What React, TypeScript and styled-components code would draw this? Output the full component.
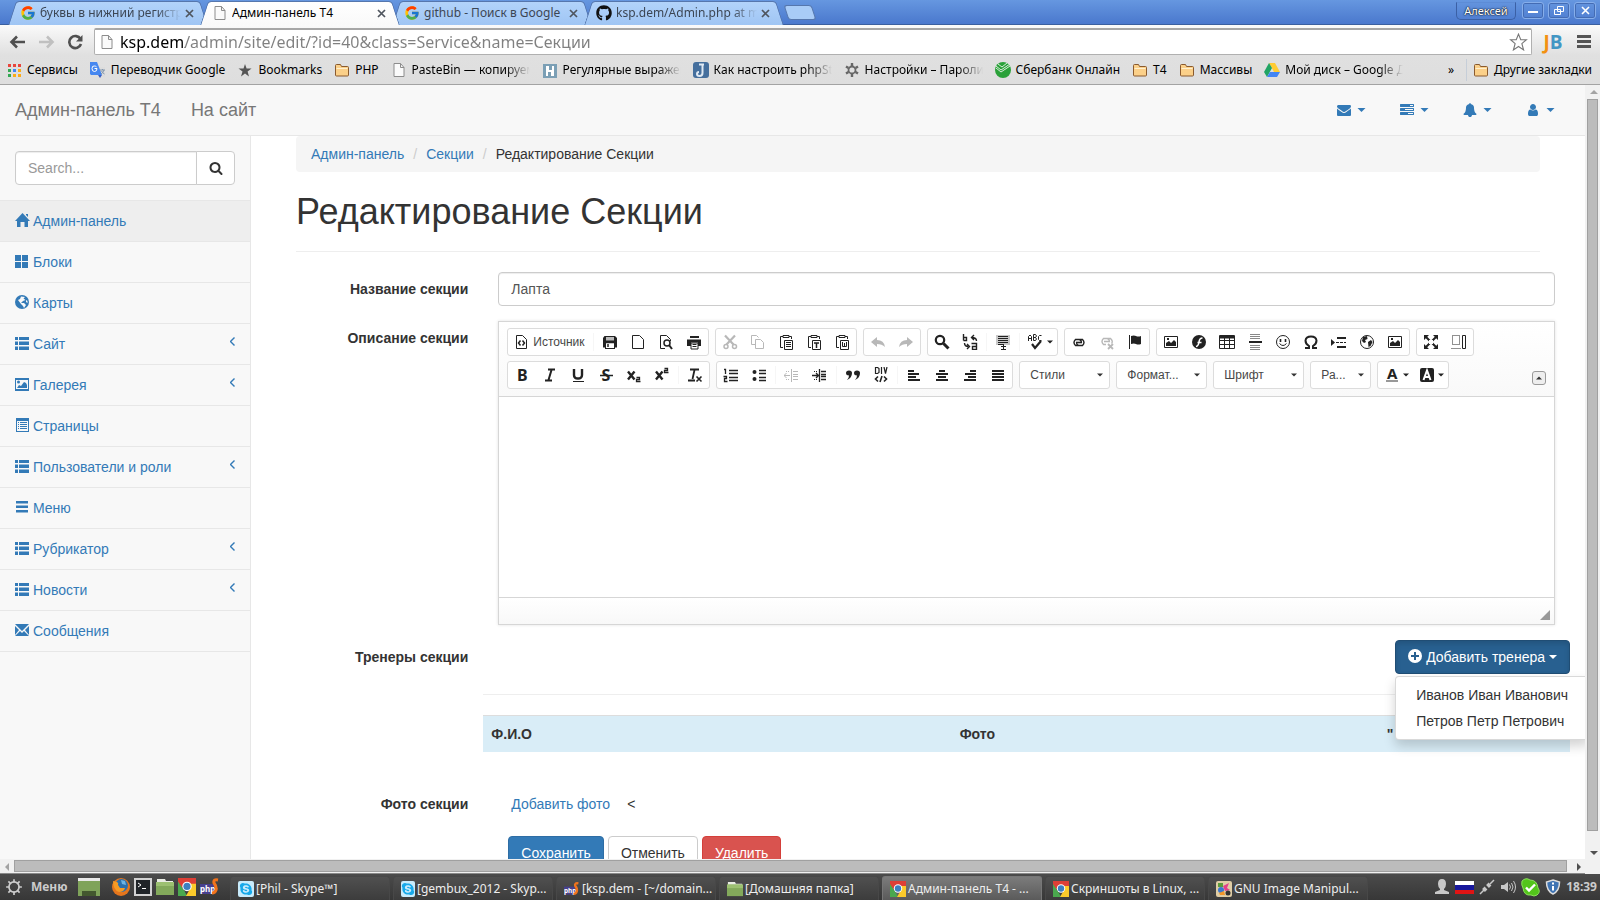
import React from 'react';
import styled, { createGlobalStyle, css } from 'styled-components';
import { FcGoogle } from 'react-icons/fc';
import { FaGithub, FaSkype } from 'react-icons/fa';

const SYSTEM_FONT = '"Noto Sans", "Open Sans", sans-serif';
const PAGE_FONT = '"Liberation Sans", Arial, sans-serif';
const BLUE = '#337ab7';

const GlobalStyle = createGlobalStyle`
  * { box-sizing: border-box; }
  body { margin: 0; overflow: hidden; font-family: ${PAGE_FONT}; font-size: 14px; line-height: 20px; color: #333; background: #fff; }
  button, input, select, textarea { font: inherit; color: inherit; margin: 0; }
  button { border: 0; padding: 0; background: none; cursor: pointer; }
  a { color: inherit; text-decoration: none; }
  ul, ol { list-style: none; margin: 0; padding: 0; }
  svg { display: block; flex: none; }
`;

/* ---------- desktop and browser window ---------- */

const Desktop = styled.div`
  height: 100vh;
  display: flex;
  flex-direction: column;
  overflow: hidden;
`;

const TitleBar = styled.header`
  flex: none;
  height: 25px;
  display: flex;
  justify-content: space-between;
  padding-left: 12px;
  font: 12px/16px ${SYSTEM_FONT};
  background: linear-gradient(#6697e0, #4a78cd);
  border-bottom: 1px solid #3a5f9f;
`;

const Tabs = styled.div`
  display: flex;
  align-items: flex-end;
`;

const Tab = styled.div<{ $active?: boolean }>`
  position: relative;
  z-index: ${p => (p.$active ? 1 : 0)};
  width: 192px;
  height: 24px;
  margin-bottom: -1px;
  padding: 0 10px 0 8px;
  display: flex;
  align-items: center;
  gap: 4px;
  color: ${p => (p.$active ? '#000' : '#3c4654')};
  &::before, &::after {
    content: '';
    position: absolute;
    z-index: -1;
    top: 0;
    bottom: 0;
    background: ${p => (p.$active ? 'linear-gradient(#fff, #f9f9f9)' : 'linear-gradient(#b2d3fa, #9fc5f4)')};
    border-top: 1px solid #5677ad;
  }
  &::before { left: 0; right: 50%; transform: skewX(-18deg); border-left: 1px solid #5677ad; border-radius: 4px 0 0 0; }
  &::after { right: 0; left: 50%; transform: skewX(18deg); border-right: 1px solid #5677ad; border-radius: 0 4px 0 0; margin-left: -6px; }
  &::before { margin-right: -6px; }
`;

const TabTitle = styled.button`
  flex: 1;
  min-width: 0;
  overflow: hidden;
  white-space: nowrap;
  text-align: left;
`;

const fade = css`
  mask-image: linear-gradient(90deg, #000 calc(100% - 24px), transparent);
`;

const FadedTabTitle = styled(TabTitle)`${fade}`;

const NewTab = styled.button`
  width: 28px;
  height: 15px;
  margin: 0 0 4px 6px;
  border: 1px solid #5677ad;
  border-radius: 3px;
  background: #a9ccf7;
  transform: skewX(18deg);
`;

const WindowButtons = styled.div`
  display: flex;
  gap: 4px;
  padding: 2px 4px 0 0;
`;

const WindowButton = styled.button`
  width: 22px;
  height: 17px;
  display: grid;
  place-items: center;
  border: 1px solid #86aeea;
  border-radius: 3px;
  color: #fff;
  box-shadow: 0 0 0 1px #446cb4 inset;
`;

const UserButton = styled.button`
  width: 60px;
  height: 18px;
  margin-right: 2px;
  border: 1px solid #3b60a5;
  border-top-color: #5d8cd6;
  border-radius: 0 0 5px 5px;
  color: #fff;
  font-size: 11px;
  text-shadow: 0 0 2px #000, 0 0 1px #000;
`;

const Toolbar = styled.div`
  flex: none;
  height: 60px;
  font: 12px/18px ${SYSTEM_FONT};
  color: #000;
  background: linear-gradient(#fafafa, #e0e0e0 30px, #dedede);
  border-bottom: 1px solid #a3a3a3;
`;

const AddressRow = styled.div`
  height: 33px;
  padding: 0 9px;
  display: flex;
  align-items: center;
  gap: 12px;
`;

const Address = styled.label`
  flex: 1;
  height: 27px;
  margin-left: -2px;
  padding: 0 3px 0 4px;
  display: flex;
  align-items: center;
  gap: 5px;
  background: #fff;
  border: 1px solid #b0b0b0;
  border-top: 2px solid #a6a6a6;
  border-radius: 2px;
`;

const AddressInput = styled.input`
  flex: 1;
  min-width: 0;
  padding: 0;
  border: 0;
  outline: 0;
  font-size: 16px;
  line-height: 22px;
  color: #808080;
  background: linear-gradient(90deg, #000 65px, #808080 65px);
  background-clip: text;
  -webkit-text-fill-color: transparent;
`;

const JetBrains = styled.button`
  width: 24px;
  margin-left: -3px;
  font: bold 19px/20px "Open Sans", sans-serif;
  color: #4296c4;
  span { color: #f29112; }
`;

const Bookmarks = styled.nav`
  height: 25px;
  padding: 0 8px 2px 6px;
  display: flex;
  align-items: center;
  gap: 12px;
`;

const Bookmark = styled.a<{ $cut?: boolean }>`
  display: flex;
  align-items: center;
  gap: 5px;
  white-space: nowrap;
  span {
    ${p => p.$cut && css`width: 118px; overflow: hidden; ${fade}`}
  }
`;

const MoreBookmarks = styled.button`
  margin-left: auto;
`;

const BookmarkDivider = styled.i`
  width: 1px;
  height: 22px;
  margin-right: -6px;
  background: #c6ced8;
`;

/* ---------- scrolled view ---------- */

const View = styled.div`
  flex: 1;
  min-height: 0;
  display: grid;
  grid-template: minmax(0, 1fr) 15px / minmax(0, 1fr) 15px;
  background: #f1f1f1;
`;

const Page = styled.div`
  overflow: hidden;
  display: flex;
  flex-direction: column;
  background: #f8f8f8;
`;

const Scrollbar = styled.div<{ $across?: boolean }>`
  display: flex;
  flex-direction: ${p => (p.$across ? 'row' : 'column')};
  padding: ${p => (p.$across ? '1px 0' : '0 2px')};
  border-bottom: ${p => (p.$across ? '1px solid #8a8a8a' : '0')};
  button { flex: none; width: 13px; height: 13px; display: grid; place-items: center; }
`;

const ScrollTrack = styled.div<{ $across?: boolean }>`
  flex: 1;
  padding: ${p => (p.$across ? '0 5px 0 1px' : '1px 0 15px')};
`;

const ScrollThumb = styled.div`
  height: 100%;
  background: #bcbcbc;
  border: 1px solid #a0a0a0;
`;

/* ---------- admin page ---------- */

const Navbar = styled.nav`
  flex: none;
  height: 51px;
  padding: 0 15px;
  display: flex;
  align-items: center;
  gap: 30px;
  color: #777;
  font-size: 18px;
  border-bottom: 1px solid #e7e7e7;
`;

const NavTools = styled.div`
  margin-left: auto;
  display: flex;
  gap: 4px;
  color: ${BLUE};
`;

const NavTool = styled.button`
  height: 50px;
  padding: 0 15px;
  display: flex;
  align-items: center;
  gap: 6px;
`;

const Body = styled.div`
  flex: 1;
  min-height: 0;
  display: flex;
`;

const Sidebar = styled.aside`
  flex: none;
  width: 250px;
`;

const Search = styled.form`
  display: flex;
  padding: 15px;
  input {
    flex: 1;
    min-width: 0;
    height: 34px;
    padding: 6px 12px;
    border: 1px solid #ccc;
    border-radius: 4px 0 0 4px;
    background: #fff;
    box-shadow: inset 0 1px 1px rgba(0, 0, 0, 0.075);
  }
  input::placeholder { color: #999; }
  button {
    width: 39px;
    margin-left: -1px;
    display: grid;
    place-items: center;
    border: 1px solid #ccc;
    border-radius: 0 4px 4px 0;
    background: #fff;
  }
`;

const Menu = styled.ul`
  border-top: 1px solid #e7e7e7;
`;

const MenuLink = styled.a<{ $active?: boolean }>`
  display: flex;
  align-items: center;
  gap: 3px;
  height: 41px;
  padding: 0 15px;
  color: ${BLUE};
  background: ${p => (p.$active ? '#eee' : 'transparent')};
  border-bottom: 1px solid #e7e7e7;
  > svg:first-child { margin-bottom: 2px; }
  > svg:last-child { margin: 0 0 6px auto; }
`;

const Content = styled.main`
  flex: 1;
  min-width: 0;
  padding: 0 45px;
  background: #fff;
  border-left: 1px solid #e7e7e7;
`;

const Breadcrumb = styled.ol`
  display: flex;
  padding: 8px 15px;
  background: #f5f5f5;
  border-radius: 4px;
  a { color: ${BLUE}; }
  li + li::before { content: '/'; padding: 0 9px; color: #ccc; }
`;

const Title = styled.h1`
  margin: 20px 0;
  padding-bottom: 19px;
  font-size: 36px;
  font-weight: 400;
  line-height: 40px;
  border-bottom: 1px solid #eee;
`;

const Form = styled.form`
  margin: 0 -30px;
`;

const Group = styled.div`
  display: grid;
  grid-template-columns: minmax(0, 1fr) minmax(0, 5fr);
  margin-bottom: 15px;
`;

const labelStyle = css`
  padding: 7px 15px 0 0;
  text-align: right;
  font-weight: bold;
`;

const Label = styled.label`${labelStyle}`;
const Caption = styled.div`${labelStyle}`;

const Field = styled.div`
  padding: 0 15px;
`;

const TextInput = styled.input`
  display: block;
  width: 100%;
  height: 34px;
  padding: 6px 12px;
  color: #555;
  border: 1px solid #ccc;
  border-radius: 4px;
  box-shadow: inset 0 1px 1px rgba(0, 0, 0, 0.075);
`;

const Button = styled.button<{ $tone?: 'primary' | 'danger' | 'open' | 'link' }>`
  height: 34px;
  padding: 0 12px;
  display: inline-flex;
  align-items: center;
  gap: 4px;
  border: 1px solid #ccc;
  border-radius: 4px;
  background: #fff;
  ${p => p.$tone === 'primary' && css`color: #fff; background: #337ab7; border-color: #2e6da4;`}
  ${p => p.$tone === 'danger' && css`color: #fff; background: #d9534f; border-color: #d43f3a;`}
  ${p => p.$tone === 'open' && css`color: #fff; background: #286090; border-color: #204d74; box-shadow: inset 0 3px 5px rgba(0, 0, 0, 0.125);`}
  ${p => p.$tone === 'link' && css`color: ${BLUE}; background: none; border-color: transparent;`}
`;

const Actions = styled.div`
  display: flex;
  gap: 4px;
  padding-left: 25px;
`;

const Dropdown = styled.div`
  position: relative;
  width: max-content;
  margin-left: auto;
`;

const DropdownMenu = styled.ul`
  position: absolute;
  z-index: 2;
  top: 100%;
  left: 0;
  margin-top: 2px;
  padding: 5px 0;
  background: #fff;
  border: 1px solid rgba(0, 0, 0, 0.15);
  border-radius: 4px;
  box-shadow: 0 6px 12px rgba(0, 0, 0, 0.175);
  a { display: block; padding: 3px 20px; white-space: nowrap; }
`;

const Rule = styled.hr`
  margin: 20px 0;
  border: 0;
  border-top: 1px solid #eee;
`;

const Table = styled.table`
  width: 100%;
  margin-bottom: 35px;
  table-layout: fixed;
  border-collapse: separate;
  border-spacing: 0;
  th { padding: 8px; text-align: left; background: #d9edf7; border-top: 1px solid #ddd; }
  th:nth-child(1) { width: 43.1%; }
  th:nth-child(2) { width: 39.3%; }
`;

const Remark = styled.span`
  padding-left: 4px;
  line-height: 32px;
`;

/* ---------- rich text editor ---------- */

const Editor = styled.div`
  border: 1px solid #d6d6d6;
  box-shadow: 0 0 3px rgba(0, 0, 0, 0.12);
`;

const EditorTools = styled.div`
  display: flex;
  flex-direction: column;
  gap: 5px;
  padding: 6px 8px 7px;
  background: linear-gradient(#fff, #f9f9f9);
  border-bottom: 1px solid #d6d6d6;
`;

const ToolRow = styled.div`
  display: flex;
  gap: 6px;
`;

const ToolGroup = styled.div`
  flex: none;
  height: 28px;
  display: flex;
  align-items: center;
  border: 1px solid #dcdcdc;
  border-radius: 3px;
  background: #fff;
`;

const Tool = styled.button<{ $off?: boolean; $width?: number }>`
  width: ${p => p.$width ?? 28}px;
  height: 26px;
  padding: 0 6px;
  display: flex;
  align-items: center;
  gap: 3px;
  color: ${p => (p.$off ? '#b8b8b8' : '#222')};
  font-size: 12px;
  text { font-family: ${SYSTEM_FONT}; font-weight: bold; fill: currentColor; stroke: none; }
`;

const ToolText = styled.span`
  color: #474747;
`;

const Separator = styled.i`
  width: 1px;
  height: 18px;
  margin: 0 2px;
  background: #f6f6f6;
`;

const Combo = styled.label<{ $small?: boolean }>`
  position: relative;
  width: ${p => (p.$small ? 61 : 91)}px;
  height: 28px;
  select {
    appearance: none;
    width: 100%;
    height: 28px;
    padding: 0 20px 0 10px;
    font-size: 12px;
    color: #474747;
    border: 1px solid #dcdcdc;
    border-radius: 3px;
    background: #fff;
  }
  svg { position: absolute; right: 7px; top: 12px; pointer-events: none; }
`;

const Collapse = styled.button`
  align-self: flex-end;
  width: 14px;
  height: 14px;
  margin: 0 0 4px auto;
  display: grid;
  place-items: center;
  border: 1px solid #999;
  border-radius: 3px;
  background: #eee;
`;

const EditorArea = styled.textarea`
  display: block;
  width: 100%;
  height: 200px;
  border: 0;
  outline: 0;
  resize: none;
`;

const EditorFoot = styled.div`
  height: 27px;
  padding: 0 4px 4px 0;
  display: flex;
  align-items: flex-end;
  justify-content: flex-end;
  border-top: 1px solid #d6d6d6;
  background: linear-gradient(#fff, #f8f8f8);
`;

/* ---------- taskbar ---------- */

const Taskbar = styled.footer`
  flex: none;
  height: 26px;
  padding: 0 3px 0 5px;
  display: flex;
  align-items: center;
  font: 12px/18px ${SYSTEM_FONT};
  color: #eee;
  background: linear-gradient(#4b4b4b, #373737);
`;

const StartButton = styled.button`
  width: 73px;
  display: flex;
  align-items: center;
  gap: 8px;
  font-weight: bold;
  color: #ccc;
`;

const Launchers = styled.div`
  width: 152px;
  display: flex;
  align-items: center;
  gap: 4px;
  button:first-child { margin-right: 8px; }
`;

const Tasks = styled.div`
  flex: 1;
  min-width: 0;
  display: flex;
  align-self: flex-end;
  gap: 3px;
`;

const Task = styled.button<{ $active?: boolean }>`
  width: 160px;
  height: 24px;
  padding: 0 7px;
  display: flex;
  align-items: center;
  gap: 2px;
  white-space: nowrap;
  border: 1px solid ${p => (p.$active ? '#777' : '#484848')};
  border-bottom: 0;
  border-radius: 3px 3px 0 0;
  background: ${p => (p.$active ? 'linear-gradient(#7c7c7c, #5a5a5a)' : 'linear-gradient(#505050, #3c3c3c)')};
`;

const Tray = styled.div`
  display: flex;
  align-items: center;
  gap: 5px;
  color: #c8c8c8;
  strong { color: #ccc; }
`;

/* ---------- icons ---------- */

type Kids = { children: React.ReactNode; w?: number; h?: number; box?: string };

const Ico = ({ children, w = 16, h = 16, box }: Kids) => (
  <svg width={w} height={h} viewBox={box ?? `0 0 ${w} ${h}`} fill="currentColor" aria-hidden="true">{children}</svg>
);
const Line = ({ children, w = 16, h = 16, box }: Kids) => (
  <svg width={w} height={h} viewBox={box ?? `0 0 ${w} ${h}`} fill="none" stroke="currentColor" aria-hidden="true">{children}</svg>
);

const Caret = ({ w = 8, up }: { w?: number; up?: boolean }) => (
  <Ico w={w} h={4} box="0 0 8 4"><path d={up ? 'M0 4L4 0L8 4z' : 'M0 0H8L4 4z'} /></Ico>
);
const FileIcon = () => (
  <Line><path d="M3 1.5h6.5l3.500 4V14.500H3z" fill="#fafafa" stroke="#8c8c8c" /><path d="M9.500 1.500v4H13" stroke="#8c8c8c" /></Line>
);
const FolderIcon = () => (
  <Line>
    <path d="M1.500 13V3.500q0-1 1-1h4l1 2h6q1 0 1 1V13q0 1-1 1h-11q-1 0-1-1z" fill="#fbd089" stroke="#8a5a2e" />
    <path d="M2.500 6.500h11" stroke="#fff0cf" />
  </Line>
);
const CloseIcon = () => <Line w={9} h={9}><path d="M1 1l7 7M8 1l-7 7" strokeWidth="1.700" stroke="#4f555e" /></Line>;
const ChromeIcon = ({ s = 16 }: { s?: number }) => (
  <Ico w={s} h={s} box="0 0 16 16">
    <path d="M0 0H16V6H5L3 10L0 5z" fill="#dd3f36" />
    <path d="M0 3L6 12L8 16H0z" fill="#4aa84e" />
    <path d="M8 5H16V16H7L11 9z" fill="#fccb2b" />
    <circle cx="8" cy="7.500" r="4.200" fill="#fff" /><circle cx="8" cy="7.500" r="3.200" fill="#3c7fc0" />
  </Ico>
);
const PhpStormIcon = ({ s = 20 }: { s?: number }) => (
  <Ico w={s} h={s === 20 ? 18 : 16} box="0 0 20 18">
    <path d="M0 6h14v10H0z" fill="#47408e" />
    <text x="0" y="14" fontSize="8" fontWeight="bold" fontFamily="Noto Sans" fill="#fff">php</text>
    <path d="M18 2q-5-1-4 3 3 4 2 7-1 3-4 3" fill="none" stroke="#f2731c" strokeWidth="3" />
  </Ico>
);
const GreenFolder = ({ s = 18 }: { s?: number }) => (
  <Ico w={s} h={s} box="0 0 18 18"><path d="M1 3V1h8l1 2h7v3H1z" fill="#e9ece4" /><path d="M0 4h18v13H0z" fill="#83a95b" /><path d="M0 4h18v4H0z" fill="#9cc071" /></Ico>
);
const SkypeTile = styled.span`
  width: 16px;
  height: 16px;
  display: grid;
  place-items: center;
  border-radius: 2px;
  background: #c9ecfc;
  color: #17a9ea;
  font-size: 14px;
`;

const FA = {
  mail: 'M1792 710v794q0 66-47 113t-113 47h-1472q-66 0-113-47t-47-113v-794q44 49 101 87 362 246 497 345 57 42 92.5 65.5t94.5 48 110 24.5h2q51 0 110-24.5t94.5-48 92.5-65.5q170-123 498-345 57-39 100-87zm0-294q0 79-49 151t-122 123q-376 261-468 325-10 7-42.5 31t-54 38.5-52 32.5-57.5 27-50 9h-2q-23 0-50-9t-57.5-27-52-32.5-54-38.5-42.5-31q-91-64-262-182.5t-205-142.5q-62-42-117-115.5t-55-136.5q0-78 41.5-130t118.5-52h1472q65 0 112.5 47t47.5 113z',
  tasks: 'M1024 1408h640v-128h-640v128zm-384-512h1024v-128h-1024v128zm640-512h384v-128h-384v128zm512 832v256q0 26-19 45t-45 19h-1664q-26 0-45-19t-19-45v-256q0-26 19-45t45-19h1664q26 0 45 19t19 45zm0-512v256q0 26-19 45t-45 19h-1664q-26 0-45-19t-19-45v-256q0-26 19-45t45-19h1664q26 0 45 19t19 45zm0-512v256q0 26-19 45t-45 19h-1664q-26 0-45-19t-19-45v-256q0-26 19-45t45-19h1664q26 0 45 19t19 45z',
  bell: 'M1728 1408q0 52-38 90t-90 38h-448q0 106-75 181t-181 75-181-75-75-181h-448q-52 0-90-38t-38-90q50-42 91-88t85-119.5 74.5-158.5 50-206 19.5-260q0-152 117-282.5t307-158.5q-8-19-8-39 0-40 28-68t68-28 68 28 28 68q0 20-8 39 190 28 307 158.5t117 282.5q0 139 19.5 260t50 206 74.5 158.500 85 119.500 91 88z',
  user: 'M1536 1399q0 109-62.5 187t-150.5 78h-854q-88 0-150.5-78t-62.5-187q0-85 8.5-160.500t31.500-152 58.500-131 94-89 134.500-34.500q131 128 313 128t313-128q76 0 134.500 34.500t94 89 58.500 131 31.500 152 8.500 160.500zm-256-887q0 159-112.500 271.500t-271.500 112.500-271.500-112.500-112.500-271.500 112.500-271.500 271.500-112.500 271.500 112.500 112.500 271.500z',
  search: 'M1216 832q0-185-131.5-316.5t-316.5-131.5-316.500 131.500-131.500 316.500 131.500 316.500 316.500 131.500 316.500-131.500 131.500-316.500zm512 832q0 52-38 90t-90 38q-54 0-90-38l-343-342q-179 124-399 124-143 0-273.500-55.500t-225-150-150-225-55.500-273.500 55.500-273.500 150-225 225-150 273.500-55.500 273.500 55.500 225 150 150 225 55.500 273.500q0 220-124 399l343 343q37 37 37 90z',
};
const Awesome = ({ d }: { d: string }) => <Ico w={14} h={14} box="0 0 1792 1792"><path d={d} /></Ico>;

const glyphs: Record<string, React.ReactNode> = {
  home: <path d="M7.500 0L15 8h-2v6H9.500V9h-4v5H2V8H0zM11 1h2v3l-2-2z" />,
  blocks: <path d="M0 1h6v6H0zM7 1h6v6H7zM0 8h6v6H0zM7 8h6v6H7z" />,
  globe: <><circle cx="7" cy="7" r="7" /><path d="M6 1.500L10 2L8.500 3.500L10.500 5L8 6L6 8H9l2 2-2 3-1-2-2-2-1.500-2L3 5l2-1zM11 5l1.500 1v2L11 7z" fill="#f8f8f8" /></>,
  list: <path d="M0 1h3v3H0zM4 1h10v3H4zM0 5.500h3v3.500H0zM4 5.500h10v3.500H4zM0 10.500h3v3.500H0zM4 10.500h10v3.500H4z" />,
  picture: <><path fillRule="evenodd" d="M0 1h14v13H0zM1 3v9h12V3z" /><path d="M2 11l2-3 2 1 3-4 2 1 1 2v3z" /><circle cx="3.500" cy="5" r="1.500" /></>,
  page: <><path fillRule="evenodd" d="M1 0h13v14H1zM2 3v10h11V3z" /><path d="M3 4h1v1H3zM5 4h7v1H5zM3 6h1v1H3zM5 6h7v1H5zM3 8h1v1H3zM5 8h7v1H5zM3 10h1v1H3zM5 10h7v1H5z" /></>,
  menu: <path d="M1 1h12v2.500H1zM1 5.500h12V8H1zM1 10h12v2.500H1z" />,
  mail: <path d="M0 1h14L7 8zM0 3l4 4-4 5zM14 3v9l-4-5zM0 13l5-5 2 2 2-2 5 5z" />,
};

const disk = <><path d="M1 4l1.500-2H13L15 4v9.500H13V15H3V13.500H1z" fill="currentColor" stroke="none" /><path d="M4 3h8v3.500H4z" fill="#bbb" stroke="none" /><path d="M4 9h8v5H4z" fill="#fff" stroke="none" /><path d="M6 10v3M4 8.500h8" strokeWidth="1.500" /></>;
const sheet = 'M2.500 1.500h7l4 4v9h-11z';
const clip = <><path d="M5 2.500H2.500v11H5M11 2.500h2.500V5M5 1.500h6v2H5z" /><path d="M6.500 6.500h8v9h-8z" fill="#fff" /></>;
const picture = <><path d="M1.500 2.500h13v11h-13z" /><path d="M3 12V9l3-2 2 2 3-3 2 2v4z" fill="currentColor" stroke="none" /><path d="M4 4h2v2H4z" fill="currentColor" stroke="none" /></>;
const bars = (a: number[][]) => a.map(([x, w], i) => <path key={i} d={`M${x} ${4 + i * 3}h${w}`} strokeWidth="2" />);

const toolIcons: Record<string, React.ReactNode> = {
  source: <><path d="M2.500 1.500h6l4 4v9h-10z" /><path d="M6.500 6.500L4.500 9l2 2.500M8.500 6.500l2 2.500-2 2.500" strokeWidth="1.500" /></>,
  save: disk,
  blank: <path d={sheet} />,
  preview: <><path d="M7 14.500H2.500v-13h6l4 4V7" /><circle cx="9" cy="9" r="3" strokeWidth="1.500" /><path d="M11 11l3 4" strokeWidth="2" /></>,
  print: <><path d="M4 3h9" strokeWidth="2" /><path d="M1 5.500h14V12h-3V8.500H5V12H1z" fill="currentColor" stroke="none" /><path d="M5 9h7v6H5zM6.500 10.500h4M6.500 12.500h4" /></>,
  cut: <><path d="M3 1.500l8.500 9M13 1.500l-8.500 9" strokeWidth="2.200" /><circle cx="4" cy="12.500" r="2" strokeWidth="1.500" /><circle cx="12.500" cy="12.500" r="2" strokeWidth="1.500" /></>,
  copy: <><path d="M5 10.500H1.500v-9h5l2 2" /><path d="M5.500 5.500h5l3 3v6h-8z" /></>,
  paste: <>{clip}<path d="M8 8.500h5M8 10.500h5M8 12.500h5" /></>,
  pasteText: <>{clip}<path d="M8 9h5M10.500 9v5" strokeWidth="1.500" /></>,
  pasteWord: <>{clip}<path d="M8.500 8v4.500h4V8M10.500 9v3" /></>,
  undo: <path d="M1 8l6-5v3q7 0 8 7-3-3-8-3v3z" fill="currentColor" stroke="none" />,
  redo: <path d="M15 8L9 3v3q-7 0-8 7 3-3 8-3v3z" fill="currentColor" stroke="none" />,
  find: <><circle cx="6" cy="6" r="4.200" strokeWidth="2.200" /><path d="M9.500 9.500l5 5" strokeWidth="3" /></>,
  replace: <><path d="M1.500 0v6.500M1.500 3.500h3v3h-3M9.500 9.500h5v6h-4v-3h4M14.500 7q0-3.500-5-3.500M12 1L9.500 3.500 12 6M2.500 9q0 3.500 4 3.500M5 10l2.500 2.500L5 15" strokeWidth="1.400" /></>,
  selectAll: <><path d="M1 1h14v10H1z" fill="#c9c9c9" stroke="none" /><path d="M3 2.500h10M3 4.500h10M3 6.500h10M3 8.500h10M3 10.500h6M8.500 11v4M6 15.500h5M6 12.500h5" /></>,
  spell: <><path d="M.5 7V2.500q1.500-3 3 0V7M.5 4.500h3M5.500 .5v6h2l1-1.500-1-1.500h-2 2l1-1.500-1-1.500zM13.500 1.500h-2l-1 1v3l1 1h2" /><path d="M4 10l3 4 6-7" strokeWidth="2.200" /></>,
  link: <><path d="M7 11.500H4.500q-3-3 0-6h4q2 1 2 3M9 5.500h2.500q3 3 0 6h-4q-2-1-2-3" strokeWidth="1.400" /><path d="M5 8.500h6" strokeWidth="1.600" /></>,
  unlink: <><path d="M7 10.500H4.500q-3-3 0-6h4q2 1 2 3M9 4.500h2.500q3 3 1 5M5 7.500h6" strokeWidth="1.400" /><path d="M9 10l5 5M14 10l-5 5" strokeWidth="1.800" /></>,
  flag: <><path d="M2.500 1v14" /><path d="M4 2q3-1 5 0t5 0v8q-3 1-5 0t-5 0z" fill="currentColor" stroke="none" /></>,
  image: picture,
  flash: <><circle cx="8" cy="8" r="7" fill="currentColor" stroke="none" /><path d="M11.500 4Q8.500 4 8 8t-3 4.500M6.500 8.500h4" stroke="#fff" strokeWidth="1.600" /></>,
  table: <><path d="M.5 1.500h15v13H.5zM.5 6.500h15M.5 10.500h15M5.500 4v11M10.500 4v11" /><path d="M1 3h14" strokeWidth="3" /></>,
  rule: <><path d="M3 .5h10M3 2.500h10M3 4.500h10M3 11.500h10M3 13.500h10M3 15.500h10" stroke="#888" /><path d="M2 8h13" strokeWidth="2" /></>,
  smile: <><circle cx="8" cy="8" r="6.500" /><path d="M5.500 5v3M10.500 5v3" strokeWidth="1.600" /><path d="M4.500 9.500q3.500 4 7 0" /></>,
  omega: <path d="M2 14h4v-2Q2.500 10 2.500 6.500 3 2.500 8 2.500t5.500 4Q13.500 10 10 12v2h4" strokeWidth="2" />,
  pageBreak: <><path d="M0 5l4 3.500-4 3.500z" fill="currentColor" stroke="none" /><path d="M6 4h9M6 13h9" strokeWidth="2" /><path d="M5 8.500h10" strokeDasharray="3 1" /></>,
  iframe: <><circle cx="8" cy="8" r="6.500" /><path d="M4 3l4-1 .5 3-2.500 1 1 2-2 1-2-2zM9 8l3-2 1.500 2-2 4-2 1z" fill="currentColor" stroke="none" /></>,
  maximize: <><path d="M3 3l10 10M13 3L3 13" strokeWidth="2" /><path d="M6 6h4v4H6z" fill="#fff" stroke="none" /><path d="M1 1h5L1 6zM15 1v5l-5-5zM1 15v-5l5 5zM15 15h-5l5-5z" fill="currentColor" stroke="none" /></>,
  showBlocks: <><path d="M1.500 1.500h7v9h-7zM.5 14.500h9" strokeDasharray="1 1" /><path d="M11.500 1.500h3v13h-3z" /></>,
  bold: <text x="3" y="14" fontSize="16">B</text>,
  italic: <path d="M6 2.500h7M3 13.500h7M9.500 3l-3 10" strokeWidth="2" />,
  underline: <><path d="M4 2v6q0 3.500 4 3.500t4-3.500V2" strokeWidth="2.400" /><path d="M3 14.500h11" /></>,
  strike: <><text x="3.500" y="14" fontSize="16">S</text><path d="M2 8.500h13" strokeWidth="1.500" /></>,
  sub: <><path d="M2 4.500l6.500 8M8.500 4.500L2 12.500" strokeWidth="2.400" /><path d="M10.500 10.500h3v2h-3v2h4" strokeWidth="1.300" /></>,
  sup: <><path d="M2 4.500l6.500 8M8.500 4.500L2 12.500" strokeWidth="2.400" /><path d="M10.500 1.500h3v2h-3v2h4" strokeWidth="1.300" /></>,
  clear: <><path d="M3 2.500h9M7.500 3l-2 9M1 13.500h7" strokeWidth="1.800" /><path d="M9.500 9.500l5 5M14.500 9.500l-5 5" strokeWidth="1.600" /></>,
  ordered: <><path d="M1 2.500h1.500V7M.5 9.500h3v2h-2v3h3M6 3.500h9M6 6.500h9M6 10.500h9M6 13.500h9" strokeWidth="1.300" /></>,
  bullets: <><circle cx="3.500" cy="5" r="2" fill="currentColor" stroke="none" /><circle cx="3.500" cy="12" r="2" fill="currentColor" stroke="none" /><path d="M8 3.500h7M8 6.500h7M8 10.500h7M8 13.500h7" strokeWidth="1.400" /></>,
  outdent: <><path d="M0 8.500h6M2.500 6L0 8.500 2.500 11M9 4.500h5M9 7.500h5M9 9.500h5M9 12.500h5M7.500 2v13" /><path d="M2 4.500h4M2 12.500h4" strokeDasharray="1 1" /></>,
  indent: <><path d="M0 8.500h6M4 6l2.500 2.500L4 11M9 4.500h5M9 7.500h5M9 9.500h5M9 12.500h5M7.500 2v13" strokeWidth="1.300" /><path d="M2 4.500h4M2 12.500h4" strokeDasharray="1 1" /></>,
  quote: <path d="M1 6q0-2.500 3-2.500T7 6q0 5-5 7 2-2 2-4.500Q1 8.500 1 6zM9 6q0-2.500 3-2.500T15 6q0 5-5 7 2-2 2-4.500Q9 8.500 9 6z" fill="currentColor" stroke="none" />,
  div: <><path d="M2.500 .5h2l1.500 1v4l-1.500 1h-2zM8.500 0v7M11 0l1.500 6.500L14 0" strokeWidth="1.200" /><path d="M5 9.500l-2.500 2.500L5 14.500M11 9.500l2.500 2.500-2.500 2.500M9 9l-2 6" strokeWidth="1.600" /></>,
  left: bars([[2, 6], [2, 11], [2, 8], [2, 12]]),
  center: bars([[5, 6], [2, 12], [4, 8], [2, 12]]),
  right: bars([[8, 6], [3, 11], [6, 8], [2, 12]]),
  justify: bars([[2, 12], [2, 12], [2, 12], [2, 12]]),
  color: <><text x="3" y="12" fontSize="15">A</text><path d="M2 14h12" stroke="#999" strokeWidth="2" /></>,
  background: <><rect x="1" y="1" width="14" height="14" rx="2" fill="currentColor" stroke="none" /><path d="M4.500 13L8 3.500 11.500 13M6 10h4" stroke="#fff" strokeWidth="2" /></>,
};

type ToolSpec = [icon: string, title: string, option?: 'off' | 'menu' | 'text'] | '|';

const ToolSet = ({ items }: { items: ToolSpec[] }) => (
  <ToolGroup>
    {items.map((item, i) =>
      item === '|' ? <Separator key={i} /> : (
        <Tool key={i} type="button" aria-label={item[1]} $off={item[2] === 'off'} $width={item[2] === 'text' ? 83 : item[2] === 'menu' ? 35 : 28}>
          <Line>{toolIcons[item[0]]}</Line>
          {item[2] === 'text' && <ToolText>{item[1]}</ToolText>}
          {item[2] === 'menu' && <Caret w={6} />}
        </Tool>
      ))}
  </ToolGroup>
);

const topTools: ToolSpec[][] = [
  [['source', 'Источник', 'text'], '|', ['save', 'Сохранить'], ['blank', 'Новая страница'], ['preview', 'Предварительный просмотр'], ['print', 'Печать']],
  [['cut', 'Вырезать', 'off'], ['copy', 'Копировать', 'off'], ['paste', 'Вставить'], ['pasteText', 'Вставить только текст'], ['pasteWord', 'Вставить из Word']],
  [['undo', 'Отменить', 'off'], ['redo', 'Повторить', 'off']],
  [['find', 'Найти'], ['replace', 'Заменить'], '|', ['selectAll', 'Выделить все'], '|', ['spell', 'Проверка орфографии', 'menu']],
  [['link', 'Ссылка'], ['unlink', 'Убрать ссылку', 'off'], ['flag', 'Якорь']],
  [['image', 'Изображение'], ['flash', 'Flash'], ['table', 'Таблица'], ['rule', 'Горизонтальная линия'], ['smile', 'Смайлы'], ['omega', 'Специальный символ'], ['pageBreak', 'Разрыв страницы'], ['iframe', 'iFrame'], ['image', 'Картинка']],
  [['maximize', 'Развернуть'], ['showBlocks', 'Показать блоки']],
];

const formatTools: ToolSpec[][] = [
  [['bold', 'Полужирный'], ['italic', 'Курсив'], ['underline', 'Подчеркнутый'], ['strike', 'Зачеркнутый'], ['sub', 'Подстрочный индекс'], ['sup', 'Надстрочный индекс'], '|', ['clear', 'Убрать форматирование']],
  [['ordered', 'Нумерованный список'], ['bullets', 'Маркированный список'], '|', ['outdent', 'Уменьшить отступ', 'off'], ['indent', 'Увеличить отступ'], '|', ['quote', 'Цитата'], ['div', 'Контейнер'], '|', ['left', 'По левому краю'], ['center', 'По центру'], ['right', 'По правому краю'], ['justify', 'По ширине']],
];

const combos = [['Стили', 'Стили'], ['Формат...', 'Форматирование'], ['Шрифт', 'Шрифт'], ['Ра...', 'Размер']];

const sections: [icon: string, text: string, nested?: boolean][] = [
  ['home', 'Админ-панель'], ['blocks', 'Блоки'], ['globe', 'Карты'], ['list', 'Сайт', true], ['picture', 'Галерея', true],
  ['page', 'Страницы'], ['list', 'Пользователи и роли', true], ['menu', 'Меню'], ['list', 'Рубрикатор', true], ['list', 'Новости', true], ['mail', 'Сообщения'],
];

const squares = ['#e8453c', '#e8453c', '#e8453c', '#34a853', '#4285f4', '#fbab17', '#34a853', '#fbab17', '#fbab17'];
const gearPath = 'M8 1v3M8 12v3M1 8h3M12 8h3M3 3l2 2M11 11l2 2M13 3l-2 2M5 11l-2 2';
const sixGear = 'M8 1v3M8 12v3M2 4.500l2.500 1.500M11.500 10l2.500 1.500M14 4.500l-2.500 1.500M4.500 10L2 11.500';

const bookmarks: { text: string; cut?: boolean; icon: React.ReactNode }[] = [
  { text: 'Сервисы', icon: <Ico>{squares.map((c, i) => <rect key={i} x={2 + (i % 3) * 5} y={2 + Math.floor(i / 3) * 5} width="3" height="3" fill={c} />)}</Ico> },
  { text: 'Переводчик Google', icon: <Ico><path d="M7 5h8v10H9z" fill="#dcdcdc" /><path d="M0 0h7l5 13H1L0 12z" fill="#4687f0" /><path d="M8 13h4l-2 3z" fill="#3a5fc4" /><path d="M7 6.500h-2.500M7 6.500q0 3-2.500 3t-2.500-3 2.500-2.500q1 0 2 .8" stroke="#fff" fill="none" /><path d="M10 8h5M12.500 7v1M14 8q-1 3-3 4M11.500 9q1 2 3 3" stroke="#8296ad" fill="none" /></Ico> },
  { text: 'Bookmarks', icon: <Ico><path d="M8 2l1.600 4.500h5l-4 3L12 14.500 8 11.500 4 14.500l1.500-5-4-3h5z" fill="#555" /></Ico> },
  { text: 'PHP', icon: <FolderIcon /> },
  { text: 'PasteBin — копируем', cut: true, icon: <FileIcon /> },
  { text: 'Регулярные выражения', cut: true, icon: <Ico><rect x="1" y="2" width="14" height="14" fill="#7b9fb5" /><path d="M4 4h3v4h3V4h2v10H9v-4H6v4H4z" fill="#fff" /></Ico> },
  { text: 'Как настроить phpStorm', cut: true, icon: <Ico><rect width="16" height="16" rx="3" fill="#456f9d" /><path d="M6 2.500h5M9.500 2v9q0 3-3 3-2.500 0-2.500-2t2-2" fill="none" stroke="#dfe9f3" strokeWidth="2" /></Ico> },
  { text: 'Настройки – Пароли', cut: true, icon: <Line><circle cx="8" cy="8" r="3.500" strokeWidth="1.800" stroke="#666" /><path d={sixGear} stroke="#666" strokeWidth="2.400" /></Line> },
  { text: 'Сбербанк Онлайн', icon: <Ico><circle cx="8" cy="8" r="8" fill="#2aa139" /><path d="M1 4l5 4L15 2M1 6l5 4 9-6M3 2l4 3 5-4" stroke="#d9efdb" fill="none" /></Ico> },
  { text: 'T4', icon: <FolderIcon /> },
  { text: 'Массивы', icon: <FolderIcon /> },
  { text: 'Мой диск – Google Диск', cut: true, icon: <Ico><path d="M5 1h6l5 9h-6z" fill="#fc3" /><path d="M5 1l3 5-5 9-3-5z" fill="#21a464" /><path d="M6 10h10l-3 5H3z" fill="#4285f4" /></Ico> },
];

const tasks: { text: string; icon: React.ReactNode; active?: boolean }[] = [
  { text: '[Phil - Skype™]', icon: <SkypeTile><FaSkype /></SkypeTile> },
  { text: '[gembux_2012 - Skyp...', icon: <SkypeTile><FaSkype /></SkypeTile> },
  { text: '[ksp.dem - [~/domain...', icon: <PhpStormIcon s={16} /> },
  { text: '[Домашняя папка]', icon: <GreenFolder s={16} /> },
  { text: 'Админ-панель T4 - ...', icon: <ChromeIcon />, active: true },
  { text: 'Скриншоты в Linux, ...', icon: <ChromeIcon /> },
  { text: 'GNU Image Manipul...', icon: <Ico><rect width="16" height="16" rx="2" fill="#dfcda5" /><path d="M2 2h5v4H2z" fill="#5a9a3c" /><path d="M7 5l6-3-2 5 3 2-5 1z" fill="#e33f8b" /><circle cx="5" cy="9" r="3" fill="#3b78d0" /><path d="M3 12l5-2 1 4H4z" fill="#f3962a" /><circle cx="12" cy="12" r="2.500" fill="#333" /></Ico> },
];

const ScrollArrow = ({ d, label, color }: { d: string; label: string; color: string }) => (
  <button type="button" aria-label={label}><Ico w={8} h={8}><path d={d} fill={color} /></Ico></button>
);

const BrowserTab = ({ icon, text, active, cut }: { icon: React.ReactNode; text: string; active?: boolean; cut?: boolean }) => {
  const Name = cut ? FadedTabTitle : TabTitle;
  return (
    <Tab $active={active}>
      {icon}
      <Name type="button">{text}</Name>
      <button type="button" aria-label="Закрыть вкладку"><CloseIcon /></button>
    </Tab>
  );
};

const Browser = () => (
  <>
    <TitleBar>
      <Tabs>
        <BrowserTab icon={<FcGoogle size={16} />} text="буквы в нижний регистр" cut />
        <BrowserTab icon={<FileIcon />} text="Админ-панель T4" active />
        <BrowserTab icon={<FcGoogle size={16} />} text="github - Поиск в Google" />
        <BrowserTab icon={<FaGithub size={16} color="#111" />} text="ksp.dem/Admin.php at master" cut />
        <NewTab type="button" aria-label="Новая вкладка" />
      </Tabs>
      <WindowButtons>
        <UserButton type="button">Алексей</UserButton>
        <WindowButton type="button" aria-label="Свернуть"><Ico w={10} h={9}><path d="M0 5h10v2H0z" /></Ico></WindowButton>
        <WindowButton type="button" aria-label="Восстановить"><Line w={10} h={9}><path d="M3.500 .5h6v5h-6zM.5 3.500h6v5h-6z" /></Line></WindowButton>
        <WindowButton type="button" aria-label="Закрыть"><Line w={9} h={9}><path d="M1 1l7 7M8 1l-7 7" strokeWidth="1.600" /></Line></WindowButton>
      </WindowButtons>
    </TitleBar>
    <Toolbar>
      <AddressRow>
        <button type="button" aria-label="Назад"><Line w={17}><path d="M16 8H3M8 2.500L2.500 8 8 13.500" stroke="#505050" strokeWidth="2.600" /></Line></button>
        <button type="button" aria-label="Вперёд"><Line w={17}><path d="M1 8h13M9 2.500L14.500 8 9 13.500" stroke="#c0c0c0" strokeWidth="2.600" /></Line></button>
        <button type="button" aria-label="Обновить"><Line w={17}><path d="M13.500 5A6 6 0 1 0 14 10" stroke="#505050" strokeWidth="2.600" /><path d="M15.500 1v6.500H9z" fill="#505050" stroke="none" /></Line></button>
        <Address>
          <FileIcon />
          <AddressInput aria-label="Адрес" defaultValue="ksp.dem/admin/site/edit/?id=40&class=Service&name=Секции" />
          <Line w={19} h={18} box="0 0 16 16"><path d="M8 1l2 5h5l-4 3.500 1.500 5.500L8 12l-4.500 3L5 9.500 1 6h5z" stroke="#777" /></Line>
        </Address>
        <JetBrains type="button"><span>J</span>B</JetBrains>
        <button type="button" aria-label="Меню браузера"><Ico w={14} h={14}><path d="M0 0h14v3H0zM0 5h14v3H0zM0 10h14v3H0z" fill="#555" /></Ico></button>
      </AddressRow>
      <Bookmarks>
        {bookmarks.map(b => <Bookmark key={b.text} href="#" $cut={b.cut}>{b.icon}<span>{b.text}</span></Bookmark>)}
        <MoreBookmarks type="button">»</MoreBookmarks>
        <BookmarkDivider />
        <Bookmark href="#"><FolderIcon /><span>Другие закладки</span></Bookmark>
      </Bookmarks>
    </Toolbar>
  </>
);

const RichEditor = () => (
  <Editor>
    <EditorTools>
      <ToolRow>{topTools.map((g, i) => <ToolSet key={i} items={g} />)}</ToolRow>
      <ToolRow>
        {formatTools.map((g, i) => <ToolSet key={i} items={g} />)}
        {combos.map(([text, name], i) => (
          <Combo key={name} $small={i === 3}>
            <select aria-label={name}><option>{text}</option></select>
            <Caret w={6} />
          </Combo>
        ))}
        <ToolSet items={[['color', 'Цвет текста', 'menu'], ['background', 'Цвет фона', 'menu']]} />
        <Collapse type="button" aria-label="Свернуть панель"><Caret w={6} up /></Collapse>
      </ToolRow>
    </EditorTools>
    <EditorArea id="description" />
    <EditorFoot><Ico w={10} h={10}><path d="M10 0v10H0z" fill="#999" /></Ico></EditorFoot>
  </Editor>
);

const AdminPage = () => (
  <Page>
    <Navbar>
      <a href="#">Админ-панель T4</a>
      <a href="#">На сайт</a>
      <NavTools>
        {([['Сообщения', FA.mail], ['Задачи', FA.tasks], ['Уведомления', FA.bell], ['Профиль', FA.user]]).map(([name, d]) => (
          <NavTool key={name} type="button" aria-label={name}><Awesome d={d} /><Caret w={9} /></NavTool>
        ))}
      </NavTools>
    </Navbar>
    <Body>
      <Sidebar>
        <Search>
          <input type="text" aria-label="Поиск" placeholder="Search..." />
          <button type="button" aria-label="Найти"><Awesome d={FA.search} /></button>
        </Search>
        <Menu>
          {sections.map(([icon, text, nested], i) => (
            <li key={text}>
              <MenuLink href="#" $active={i === 0}>
                <Ico w={15} h={15}>{glyphs[icon]}</Ico>
                <span>{text}</span>
                {nested && <Line w={5} h={9}><path d="M4.500 .5l-4 4 4 4" strokeWidth="1.400" /></Line>}
              </MenuLink>
            </li>
          ))}
        </Menu>
      </Sidebar>
      <Content>
        <Breadcrumb>
          <li><a href="#">Админ-панель</a></li>
          <li><a href="#">Секции</a></li>
          <li>Редактирование Секции</li>
        </Breadcrumb>
        <Title>Редактирование Секции</Title>
        <Form>
          <Group>
            <Label htmlFor="name">Название секции</Label>
            <Field><TextInput id="name" defaultValue="Лапта" /></Field>
          </Group>
          <Group>
            <Label htmlFor="description">Описание секции</Label>
            <Field><RichEditor /></Field>
          </Group>
          <Group>
            <Caption>Тренеры секции</Caption>
            <div>
              <Dropdown>
                <Button type="button" $tone="open">
                  <Ico w={14} h={16}><circle cx="7" cy="7" r="7" /><path d="M6 3h2v3h3v2H8v3H6V8H3V6h3z" fill="#286090" /></Ico>
                  Добавить тренера
                  <Caret />
                </Button>
                <DropdownMenu>
                  <li><a href="#">Иванов Иван Иванович</a></li>
                  <li><a href="#">Петров Петр Петрович</a></li>
                </DropdownMenu>
              </Dropdown>
              <Rule />
              <Table>
                <thead><tr><th>Ф.И.О</th><th>Фото</th><th>"</th></tr></thead>
              </Table>
            </div>
            <Caption>Фото секции</Caption>
            <Field>
              <Button type="button" $tone="link">Добавить фото</Button>
              <Remark>&lt;</Remark>
            </Field>
          </Group>
          <Group>
            <span />
            <Actions>
              <Button type="button" $tone="primary">Сохранить</Button>
              <Button type="button">Отменить</Button>
              <Button type="button" $tone="danger">Удалить</Button>
            </Actions>
          </Group>
        </Form>
      </Content>
    </Body>
  </Page>
);

const SystemPanel = () => (
  <Taskbar>
    <StartButton type="button">
      <Line w={18} h={18} box="0 0 16 16"><circle cx="8" cy="8" r="4.500" strokeWidth="1.500" /><path d={gearPath} strokeWidth="1.500" /></Line>
      Меню
    </StartButton>
    <Launchers>
      <button type="button" aria-label="Свернуть все окна"><Ico w={22} h={18}><path d="M0 0h22v18H0z" fill="#7fa35a" /><path d="M0 0h22v3H0z" fill="#e8e8e8" /><path d="M4 13h14v5H4z" fill="#43582f" /></Ico></button>
      <button type="button" aria-label="Firefox"><Ico w={18} h={18}><circle cx="9" cy="9" r="9" fill="#e5761d" /><circle cx="9.500" cy="7.500" r="6.500" fill="#2b6fad" /><path d="M1 3l4 1q2 1 1 3l2 3h5q-1 4-6 4Q1 12 1 3z" fill="#f59b25" /><path d="M9 2l4 1 1 4-4-1z" fill="#6cb4e4" /></Ico></button>
      <button type="button" aria-label="Терминал"><Line w={18} h={18}><path d="M1 1h16v16H1z" fill="#202428" stroke="#d2d2d2" strokeWidth="2" /><path d="M4 5l3 2-3 2M8 10.500h4" stroke="#fff" /></Line></button>
      <button type="button" aria-label="Файлы"><GreenFolder /></button>
      <button type="button" aria-label="Chrome"><ChromeIcon s={18} /></button>
      <button type="button" aria-label="PhpStorm"><PhpStormIcon /></button>
    </Launchers>
    <Tasks>{tasks.map(t => <Task key={t.text} type="button" $active={t.active}>{t.icon}{t.text}</Task>)}</Tasks>
    <Tray>
      <Ico><path d="M8 0q4 0 4 5 0 3-2 5v1l5 2v2H1v-2l5-2v-1Q4 8 4 5q0-5 4-5z" /></Ico>
      <Ico w={19} h={13}><path d="M0 0h19v5H0z" fill="#fff" /><path d="M0 4h19v5H0z" fill="#17179c" /><path d="M0 9h19v4H0z" fill="#e01414" /></Ico>
      <Line><path d="M1 15l4-4M11 5l4-4" strokeWidth="1.500" /><path d="M4.500 11.500L7 9M8.500 7.500L11 5" strokeWidth="4" /></Line>
      <Line><path d="M1 6h3l4-3v10l-4-3H1z" fill="currentColor" stroke="none" /><path d="M9.500 5.500q2 2.500 0 5M11.500 4q3 4 0 8M13.500 2q4 6 0 12" /></Line>
      <Line w={19} h={19}><path d="M1 3q4-4 8-1 7 0 8 8 3 4-1 7-3 2-6 0-7 1-8-7-2-3-1-7z" fill="#53c41b" stroke="#8be05b" /><path d="M5 9.500l3 3 6-6" stroke="#fff" strokeWidth="2.400" /></Line>
      <Line><path d="M8 1l6.500 2q0 9-6.500 12Q1.500 12 1.500 3z" fill="#3f74b3" stroke="#ddd" strokeWidth="1.500" /><path d="M8 3.500v2M8 7v4.500" stroke="#fff" strokeWidth="2" /></Line>
      <strong>18:39</strong>
    </Tray>
  </Taskbar>
);

export default function App() {
  return (
    <Desktop>
      <GlobalStyle />
      <Browser />
      <View>
        <AdminPage />
        <Scrollbar>
          <ScrollArrow label="Вверх" d="M0 6l4-4 4 4z" color="#a3a3a3" />
          <ScrollTrack><ScrollThumb /></ScrollTrack>
          <ScrollArrow label="Вниз" d="M0 2h8L4 6z" color="#505050" />
        </Scrollbar>
        <Scrollbar $across>
          <ScrollArrow label="Влево" d="M6 0v8L2 4z" color="#a3a3a3" />
          <ScrollTrack $across><ScrollThumb /></ScrollTrack>
          <ScrollArrow label="Вправо" d="M2 0v8l4-4z" color="#505050" />
        </Scrollbar>
      </View>
      <SystemPanel />
    </Desktop>
  );
}
